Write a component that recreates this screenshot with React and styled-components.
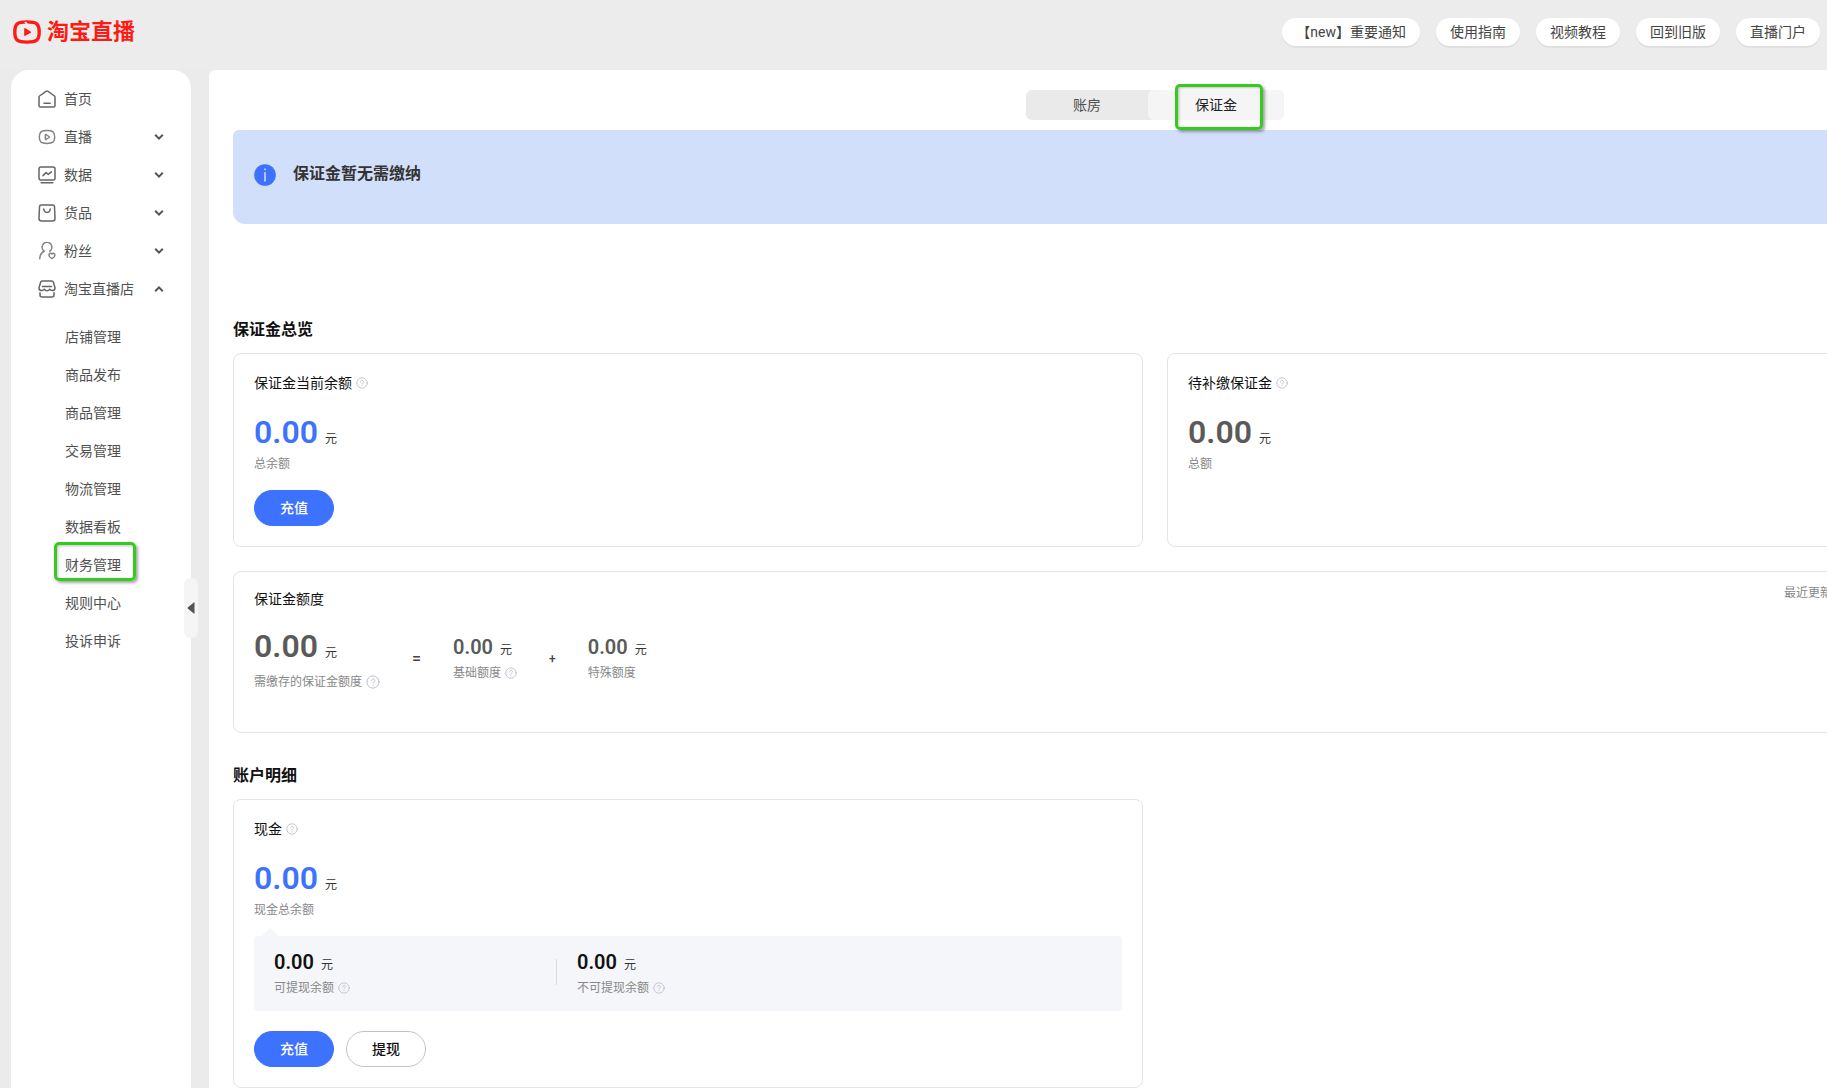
import React from 'react'
import styled, { createGlobalStyle, css } from 'styled-components'

const menu = [
  { name: '首页', icon: 'home' },
  { name: '直播', icon: 'live', arrow: 'down' },
  { name: '数据', icon: 'data', arrow: 'down' },
  { name: '货品', icon: 'goods', arrow: 'down' },
  { name: '粉丝', icon: 'fans', arrow: 'down' },
  { name: '淘宝直播店', icon: 'store', arrow: 'up' },
]

const subMenu = [
  '店铺管理', '商品发布', '商品管理', '交易管理', '物流管理',
  '数据看板', '财务管理', '规则中心', '投诉申诉',
]

const topLinks = ['【new】重要通知', '使用指南', '视频教程', '回到旧版', '直播门户']

const icons = {
  home: (
    <>
      <path d="M1 7Q1 6.400 1.500 6L8 1.400Q9 .8 10 1.400L16.500 6Q17 6.400 17 7V15.500Q17 17 15.500 17H2.500Q1 17 1 15.500Z" />
      <path d="M6 13.300H12.200" />
    </>
  ),
  live: (
    <g opacity=".8">
      <path d="M9 2.600C14.800 2.600 16.700 4 16.700 9S14.800 15.400 9 15.400 1.300 14 1.300 9 3.200 2.600 9 2.600Z" />
      <path d="M7.400 6.800Q7.400 6.200 8 6.500L11 8.500Q11.600 9 11 9.500L8 11.500Q7.400 11.800 7.400 11.200Z" />
    </g>
  ),
  data: (
    <>
      <rect x="1" y="1" width="16" height="13" rx="2" />
      <path d="M5 9.600L8 6.600L10.200 8.400L13.400 5.800M3.200 16.800H14.800" />
    </>
  ),
  goods: (
    <>
      <path d="M3.300 1H14.700Q16.300 1 16.500 2.700L17 14.500Q17 17 14.500 17H3.500Q1 17 1 14.500L1.500 2.700Q1.700 1 3.300 1Z" />
      <path d="M5.800 5C6 9.500 12 9.500 12.200 5" />
    </>
  ),
  fans: (
    <g opacity=".8">
      <path d="M6.200 9.200A4.900 4.900 0 1 1 11.800 9.200M6.200 9.200C3.500 10.300 2 13 1.700 16.800" />
      <path d="M13.900 16.700C11.300 15.200 10.500 13.600 11.200 12.200C11.800 11.100 13.200 11.100 13.900 12C14.600 11.100 16 11.100 16.600 12.200C17.300 13.600 16.500 15.200 13.900 16.700Z" />
    </g>
  ),
  store: (
    <>
      <path d="M4.200 1H13.800Q15 1 15.300 2L17 7.700C17.200 11 13 11.300 11.700 9.200C10.500 11.300 7.500 11.300 6.300 9.200C5 11.300 .8 11 1 7.700L2.700 2Q3 1 4.200 1Z" />
      <path d="M4.500 6.500H13.500M2 12.800V15Q2 17 4 17H14Q16 17 16 15V12.800" />
    </>
  ),
}

const MenuIcon = ({ name }) => (
  <svg width="18" height="18" viewBox="0 0 18 18" fill="none" stroke="#666" strokeWidth="1.500" strokeLinecap="round" strokeLinejoin="round" aria-hidden="true">
    {icons[name]}
  </svg>
)

const Help = ({ size = 12 }) => (
  <svg width={size} height={size} viewBox="0 0 12 12" fill="none" stroke="#b9b9c4" strokeWidth=".8" strokeLinecap="round" aria-hidden="true">
    <circle cx="6" cy="6" r="5.200" />
    <path d="M4.600 4.800C4.600 2.900 7.500 2.900 7.500 4.700C7.500 5.700 6 5.900 6 7.100M6 8.700V8.900" />
  </svg>
)

const Logo = () => (
  <svg width="28" height="24" viewBox="0 0 28 24" aria-hidden="true">
    <path d="M14 1.900C23.500 1.900 26.200 3.600 26.200 12S23.500 22.100 14 22.100 1.800 20.400 1.800 12 4.500 1.900 14 1.900Z" fill="none" stroke="#ff1a14" strokeWidth="3.400" />
    <path d="M11.400 2.600L12.800 1.400L15.400 4.400L13 4.200Z" fill="#ececec" />
    <path d="M11.200 9Q11.200 7.600 12.400 8.300L17.700 11.400Q18.600 12 17.700 12.700L12.400 15.800Q11.200 16.500 11.200 15.100Z" fill="#ff1a14" />
  </svg>
)

const Money = ({ value = '0.00', label, size, color, help }) => (
  <div>
    <Amount $size={size} $color={color}>
      <strong>{value}</strong>
      <span>元</span>
    </Amount>
    <Label $size={size}>
      {label}
      {help && <Help size={help} />}
    </Label>
  </div>
)

const App = () => {
  return (
    <>
      <GlobalStyle />
      <Page>
        <Header>
          <Brand href="#">
            <Logo />
            淘宝直播
          </Brand>
          <TopNav>
            {topLinks.map((item) => (
              <TopLink href="#" key={item}>{item}</TopLink>
            ))}
          </TopNav>
        </Header>
        <Body>
          <Sidebar>
            {menu.map((item) => (
              <MenuItem type="button" key={item.name}>
                <MenuIcon name={item.icon} />
                <span>{item.name}</span>
                {item.arrow && (
                  <Arrow $up={item.arrow === 'up'} width="10" height="8" viewBox="0 0 10 8" aria-hidden="true">
                    <path d="M1.200 1.800L5 5.600L8.800 1.800" fill="none" stroke="#555" strokeWidth="2" />
                  </Arrow>
                )}
              </MenuItem>
            ))}
            <SubMenu>
              {subMenu.map((item) => (
                <li key={item}>
                  <SubLink href="#">
                    {item}
                    {item === '财务管理' && <MenuMark />}
                  </SubLink>
                </li>
              ))}
            </SubMenu>
            <Collapse type="button" aria-label="收起">
              <svg width="8" height="12" viewBox="0 0 8 12" aria-hidden="true">
                <path d="M7.500 .8V11.200Q7.500 12 6.800 11.500L1 6.700Q.3 6 1 5.300L6.800 .5Q7.500 0 7.500 .8Z" fill="#555" />
              </svg>
            </Collapse>
          </Sidebar>
          <Main>
            <Content>
              <Tabs>
                <Tab type="button">账房</Tab>
                <Tab type="button" $active>
                  保证金
                  <TabMark />
                </Tab>
              </Tabs>
              <Notice>
                <svg width="22" height="22" viewBox="0 0 22 22" aria-hidden="true">
                  <circle cx="11" cy="11" r="10.800" fill="#3d72ff" />
                  <path d="M11 8.200V17.400M11 4.600V6.200" stroke="#c4d5ff" strokeWidth="1.700" />
                </svg>
                <p>保证金暂无需缴纳</p>
              </Notice>

              <SectionTitle $first>保证金总览</SectionTitle>
              <Grid>
                <Card>
                  <CardTitle>保证金当前余额<Help /></CardTitle>
                  <Money label="总余额" size="large" color="#3d72ff" />
                  <Actions>
                    <Button type="button" $primary>充值</Button>
                  </Actions>
                </Card>
                <Card>
                  <CardTitle>待补缴保证金<Help /></CardTitle>
                  <Money label="总额" size="large" color="#5a5a5a" />
                </Card>
                <QuotaCard>
                  <QuotaHead>
                    <h3>保证金额度</h3>
                    <Updated>最近更新</Updated>
                  </QuotaHead>
                  <Formula>
                    <Money label="需缴存的保证金额度" size="quota" color="#5a5a5a" help={14} />
                    <Sign>=</Sign>
                    <Money label="基础额度" color="#5a5a5a" help={12} />
                    <Sign $small>+</Sign>
                    <Money label="特殊额度" color="#5a5a5a" />
                  </Formula>
                </QuotaCard>
              </Grid>

              <SectionTitle>账户明细</SectionTitle>
              <Grid>
                <Card>
                  <CardTitle>现金<Help /></CardTitle>
                  <Money label="现金总余额" size="large" color="#3d72ff" />
                  <Detail>
                    <DetailItem>
                      <Money label="可提现余额" color="#111" help={12} />
                    </DetailItem>
                    <DetailItem>
                      <Money label="不可提现余额" color="#111" help={12} />
                    </DetailItem>
                  </Detail>
                  <Actions>
                    <Button type="button" $primary>充值</Button>
                    <Button type="button">提现</Button>
                  </Actions>
                </Card>
              </Grid>
            </Content>
          </Main>
        </Body>
      </Page>
    </>
  )
}

const GlobalStyle = createGlobalStyle`
* {
  box-sizing: border-box;
  margin: 0;
  padding: 0;
}
body {
  background: #ebebeb;
  color: #111;
  font-family: Roboto, "Noto Sans CJK SC", sans-serif;
  font-size: 14px;
  line-height: 18px;
}
button {
  border: none;
  background: none;
  font: inherit;
  color: inherit;
  cursor: pointer;
}
a {
  color: inherit;
  text-decoration: none;
}
svg {
  flex: none;
}
`

const Page = styled.div`
display: flex;
flex-direction: column;
height: 100vh;
overflow: hidden;
`

const Header = styled.header`
display: flex;
flex: none;
justify-content: space-between;
height: 70px;
padding: 18px 7px 0 13px;
background: #ececec;
`

const Brand = styled.a`
display: flex;
align-items: center;
gap: 6px;
height: 28px;
color: #ff1a14;
font-size: 22px;
font-weight: 700;
line-height: 28px;
`

const TopNav = styled.nav`
display: flex;
gap: 16px;
`

const TopLink = styled.a`
height: 28px;
padding: 0 14px;
border-radius: 14px;
background: #fff;
box-shadow: 0 2px 1px rgba(0, 0, 0, 0.05);
color: #444;
line-height: 28px;
white-space: nowrap;
`

const Body = styled.div`
display: flex;
flex: 1;
gap: 18px;
min-height: 0;
padding-left: 11px;
`

const Sidebar = styled.nav`
position: relative;
flex: none;
width: 180px;
padding-top: 10px;
border-radius: 18px 18px 0 0;
background: #fff;
`

const MenuItem = styled.button`
display: flex;
align-items: center;
gap: 8px;
width: 100%;
height: 38px;
padding: 0 27px;
color: #505050;
span {
  flex: 1;
  text-align: left;
  white-space: nowrap;
}
`

const Arrow = styled.svg`
transform: ${({ $up }) => ($up ? 'rotate(180deg)' : 'none')};
`

const SubMenu = styled.ul`
margin-top: 10px;
list-style: none;
`

const SubLink = styled.a`
position: relative;
display: block;
padding-left: 54px;
color: #505050;
line-height: 38px;
`

const mark = css`
position: absolute;
border: 3px solid #36c91e;
border-radius: 5px;
box-shadow: 2px 2px 3px rgba(0, 0, 0, 0.35), inset 1px 1px 3px rgba(0, 0, 0, 0.25);
pointer-events: none;
`

const MenuMark = styled.i`
${mark}
top: -4px;
left: 43px;
width: 82px;
height: 39px;
`

const TabMark = styled.i`
${mark}
top: -6px;
left: 27px;
width: 88px;
height: 46px;
`

const Collapse = styled.button`
position: absolute;
top: 508px;
right: -7px;
display: flex;
align-items: center;
justify-content: center;
width: 14px;
height: 60px;
border-radius: 6px;
background: #f5f5f5;
`

const Main = styled.main`
flex: 1;
min-width: 0;
overflow: auto;
scrollbar-width: none;
border-radius: 6px 0 0 0;
background: #fff;
`

/* desktop layout, narrower windows scroll sideways */
const Content = styled.div`
min-width: 1892px;
padding: 20px 24px 0;
`

const Tabs = styled.div`
display: flex;
width: fit-content;
margin: 0 auto;
border-radius: 6px;
background: #eaeaea;
`

const Tab = styled.button`
position: relative;
height: 30px;
padding: 0 47px;
border-radius: 6px;
color: ${({ $active }) => ($active ? '#222' : '#505050')};
background: ${({ $active }) => ($active ? '#f5f5f5' : 'none')};
`

const Notice = styled.div`
display: flex;
align-items: flex-start;
gap: 17px;
height: 94px;
margin-top: 10px;
padding: 34px 21px 0;
border-radius: 6px 6px 12px 12px;
background: #d2dffb;
color: #333;
font-size: 16px;
font-weight: 700;
line-height: 20px;
`

const SectionTitle = styled.h2`
margin: ${({ $first }) => ($first ? '94px' : '31px')} 0 11px;
font-size: 16px;
font-weight: 700;
line-height: 24px;
`

const Grid = styled.div`
display: grid;
grid-template-columns: 1fr 1fr;
gap: 24px;
`

const Card = styled.section`
padding: 20px;
border: 1px solid #e3e4ea;
border-radius: 8px;
`

const CardTitle = styled.h3`
display: flex;
align-items: center;
gap: 4px;
margin-bottom: 20px;
font-size: 14px;
font-weight: 400;
line-height: 18px;
`

const QuotaCard = styled(Card)`
grid-column: 1 / -1;
padding: 18px 20px 41px;
`

const QuotaHead = styled.div`
display: flex;
justify-content: space-between;
margin-bottom: 18px;
h3 {
  font-size: 14px;
  font-weight: 400;
}
`

const Updated = styled.span`
width: 272px;
color: #888;
font-size: 12px;
line-height: 6px;
`

const Formula = styled.div`
display: flex;
align-items: center;
gap: 32px;
`

const Sign = styled.span`
color: #444;
font-size: ${({ $small }) => ($small ? '12px' : '16px')};
font-weight: 500;
`

const Amount = styled.div`
display: flex;
align-items: baseline;
gap: 7px;
color: ${({ $color }) => $color};
line-height: ${({ $size }) => ($size ? '40px' : '24px')};
strong {
  font-size: ${({ $size }) => ($size ? '32px' : '20px')};
  font-weight: 600;
}
span {
  color: #333;
  font-size: 12px;
  line-height: 18px;
}
`

const labelGap = { large: '3px', quota: '7px' }

const Label = styled.div`
display: flex;
align-items: center;
gap: 4px;
margin-top: ${({ $size }) => labelGap[$size] || '5px'};
color: #888;
font-size: 12px;
line-height: 18px;
`

const Detail = styled.div`
position: relative;
display: flex;
margin-top: 17px;
padding: 14px 0;
border-radius: 4px;
background: #f5f6fa;
&::before {
  content: "";
  position: absolute;
  top: -8px;
  left: 8px;
  border: 8px solid transparent;
  border-top: none;
  border-bottom-color: #f5f6fa;
}
`

const DetailItem = styled.div`
display: flex;
align-items: center;
width: 303px;
padding-left: 20px;
&:first-child::after {
  content: "";
  width: 1px;
  height: 26px;
  margin: 0 0 4px auto;
  background: #dcdde3;
}
`

const Actions = styled.div`
display: flex;
gap: 12px;
margin-top: 17px;
${Detail} + & {
  margin-top: 20px;
}
`

const Button = styled.button`
width: 80px;
height: 36px;
border: 1px solid ${({ $primary }) => ($primary ? '#3d72ff' : '#c2c1d0')};
border-radius: 18px;
background: ${({ $primary }) => ($primary ? '#3d72ff' : '#fff')};
color: ${({ $primary }) => ($primary ? '#fff' : '#111')};
font-weight: 500;
`

export default App
